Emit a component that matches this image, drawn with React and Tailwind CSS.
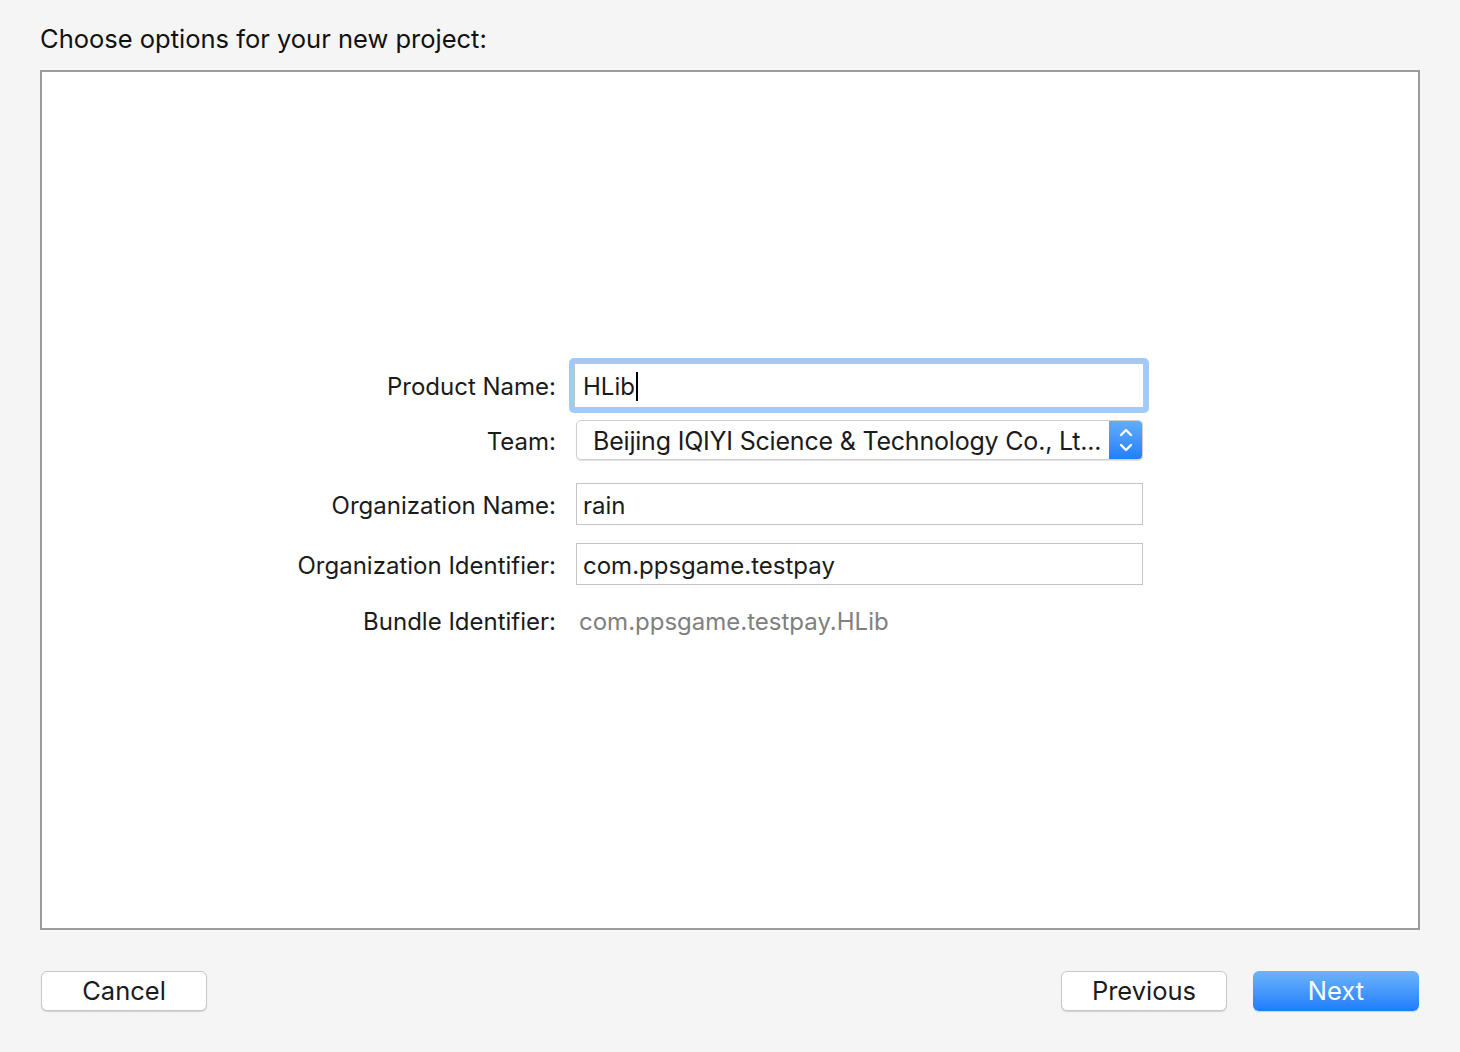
const font = { fontFamily: 'Inter, "Liberation Sans", Arial, sans-serif' }

function Label({ children }) {
  return (
    <div className="w-[534px] shrink-0 pt-[3px] pr-[20px] text-right text-[24px] text-[#1b1b1b]">
      {children}
    </div>
  )
}

function TextField({ value }) {
  return (
    <div className="flex h-[42px] w-[567px] items-center border border-[#c4c4c4] bg-white px-[6px] pt-[3px] text-[24px] text-[#1b1b1b]">
      {value}
    </div>
  )
}

// up/down stepper arrows of the popup button
function Stepper() {
  return (
    <svg width="14" height="28" viewBox="0 0 14 28" fill="none" stroke="white" strokeWidth="2.4" strokeLinecap="round" strokeLinejoin="round">
      <path d="M2 9 L7 4 L12 9" />
      <path d="M2 19 L7 24 L12 19" />
    </svg>
  )
}

export default function App() {
  return (
    <div className="flex h-[1052px] w-[1460px] flex-col bg-[#f5f5f5] px-[40px]" style={font}>
      <h1 className="pt-[22px] pb-[14px] text-[25.5px] leading-[34px] text-[#111]">
        Choose options for your new project:
      </h1>

      <div className="h-[860px] w-[1380px] border-2 border-[#9b9b9b] bg-white pt-[286px]">
        <div className="flex flex-col">
          {/* Product Name, focused */}
          <div className="flex h-[55px] items-center">
            <Label>Product Name:</Label>
            <div className="-ml-[7px] rounded-[5px] bg-[#9fcaf9] p-[5px]">
              <div className="flex h-[45px] w-[570px] items-center border border-[#c4c4c4] bg-white px-[8px] pt-[2px] text-[24px] text-[#1b1b1b]">
                HLib
                <span className="ml-[1px] h-[29px] w-[2px] bg-black" />
              </div>
            </div>
          </div>

          {/* Team popup */}
          <div className="mt-[7px] flex h-[40px] items-center">
            <Label>Team:</Label>
            <div className="flex h-[40px] w-[567px] items-stretch overflow-hidden rounded-[5px] border border-[#cfcfcf] bg-white shadow-[0_1px_1px_rgba(0,0,0,0.12)]">
              <div className="flex flex-1 items-center truncate pt-[3px] pl-[16px] text-[25px] tracking-[-0.2px] text-[#1b1b1b]">
                Beijing IQIYI Science &amp; Technology Co., Lt...
              </div>
              <div className="flex w-[33px] items-center justify-center bg-gradient-to-b from-[#62acfb] to-[#1f7ffb]">
                <Stepper />
              </div>
            </div>
          </div>

          <div className="mt-[23px] flex h-[42px] items-center">
            <Label>Organization Name:</Label>
            <TextField value="rain" />
          </div>

          <div className="mt-[18px] flex h-[42px] items-center">
            <Label>Organization Identifier:</Label>
            <TextField value="com.ppsgame.testpay" />
          </div>

          <div className="mt-[17px] flex h-[36px] items-center">
            <Label>Bundle Identifier:</Label>
            <div className="pt-[3px] pl-[3px] text-[24px] text-[#808080]">com.ppsgame.testpay.HLib</div>
          </div>
        </div>
      </div>

      <div className="mt-[41px] flex items-center pl-[1px] pr-[1px]">
        <button className="h-[40px] w-[166px] rounded-[6px] border border-[#c8c8c8] bg-white text-[25.5px] text-[#1b1b1b] shadow-[0_1px_1px_rgba(0,0,0,0.15)]">
          Cancel
        </button>
        <div className="flex-1" />
        <button className="h-[40px] w-[166px] rounded-[6px] border border-[#c8c8c8] bg-white text-[25.5px] text-[#1b1b1b] shadow-[0_1px_1px_rgba(0,0,0,0.15)]">
          Previous
        </button>
        <button className="ml-[26px] h-[40px] w-[166px] rounded-[6px] bg-gradient-to-b from-[#6cb3fa] to-[#1a7dfb] text-[25.5px] text-white shadow-[0_1px_1px_rgba(0,0,0,0.15)]">
          Next
        </button>
      </div>
    </div>
  )
}
